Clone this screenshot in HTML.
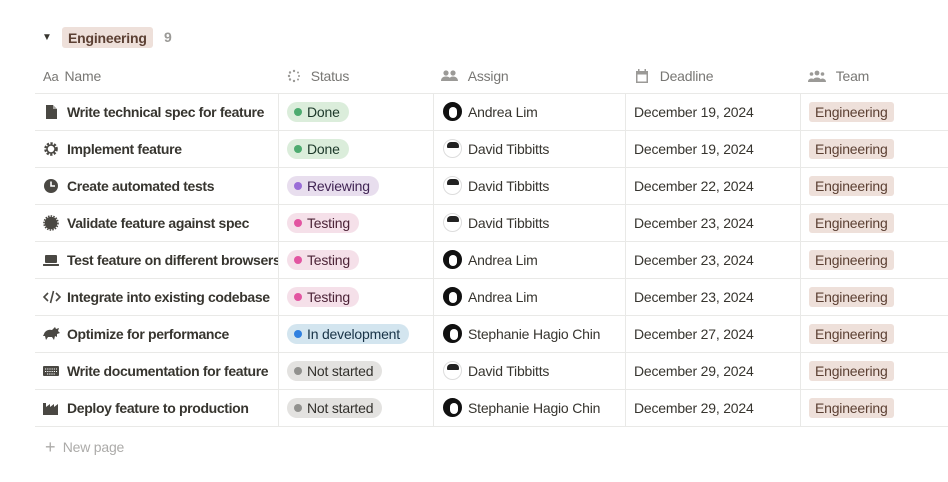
<!DOCTYPE html>
<html><head><meta charset="utf-8"><style>
*{box-sizing:border-box;margin:0;padding:0}
body{width:948px;height:482px;background:#fff;font-family:"Liberation Sans",sans-serif;color:#37352f;position:relative;overflow:hidden;font-size:14px;letter-spacing:-0.2px}
.abs{position:absolute}
.hl{position:absolute;left:35px;right:0;height:1px;background:#e9e9e7}
.vl{position:absolute;width:1px;background:#e9e9e7;top:93px;height:333px}
.hd{position:absolute;top:67px;font-size:14px;color:#787774;display:flex;align-items:center;gap:6px;height:18px}
.row{position:absolute;left:0;width:948px;height:37px}
.c{position:absolute;top:0;height:37px;display:flex;align-items:center;white-space:nowrap;overflow:hidden}
.nm{left:42px;width:236px;font-weight:bold;font-size:14px;gap:7px;letter-spacing:-0.35px}
.nm svg{flex:none}
.pill{display:inline-flex;align-items:center;height:20px;border-radius:10px;padding:0 9px 0 7px;font-size:14px;gap:5px}
.pill i{width:8px;height:8px;border-radius:50%;display:inline-block}
.as{left:443px;gap:6px}
.av{width:19px;height:19px;border-radius:50%;background:#fff;border:1px solid #ddd;position:relative;overflow:hidden}
.dl{left:634px}
.tag{background:#eee0da;color:#5c4033;height:20px;border-radius:3px;padding:0 6px;display:inline-flex;align-items:center;font-size:14px}
</style></head><body>
<div class="abs" style="left:42px;top:32px;font-size:10px">▼</div>
<div class="abs tag" style="left:62px;top:27px;height:21px;font-weight:bold;color:#5c4033">Engineering</div>
<div class="abs" style="left:164px;top:29px;color:#9b9a97;font-weight:bold">9</div>

<div class="hd" style="left:43px"><span style="font-size:13px">Aa</span>Name</div>
<div class="hd" style="left:287px"><svg width="14" height="14" viewBox="0 0 14 14" fill="#9b9a97"><circle cx="7" cy="2" r="1.2"/><circle cx="11" cy="3.5" r="1"/><circle cx="12" cy="7" r="1"/><circle cx="11" cy="10.5" r="1"/><circle cx="7" cy="12" r="1.2"/><circle cx="3" cy="10.5" r="1.2"/><circle cx="2" cy="7" r="1.2"/><circle cx="3" cy="3.5" r="1.2"/></svg>&nbsp;Status</div>
<div class="hd" style="left:441px"><svg width="17" height="12" viewBox="0 0 17 12" fill="#9b9a97"><circle cx="5" cy="3" r="2.6"/><circle cx="12" cy="3" r="2.6"/><path d="M0 11c0-3 2-4.5 5-4.5s5 1.5 5 4.5zM8 11c0-3 1.5-4.5 4-4.5s5 1.5 5 4.5z"/></svg>&nbsp;Assign</div>
<div class="hd" style="left:634px"><svg width="16" height="16" viewBox="0 0 16 16" fill="#9b9a97"><path d="M2 3h12v12H2z M3.5 6.5v7h9v-7z" fill-rule="evenodd"/><rect x="4" y="1" width="1.5" height="3"/><rect x="10.5" y="1" width="1.5" height="3"/></svg>&nbsp;Deadline</div>
<div class="hd" style="left:808px"><svg width="18" height="12" viewBox="0 0 18 12" fill="#9b9a97"><circle cx="9" cy="3" r="2.4"/><circle cx="3.5" cy="4" r="1.8"/><circle cx="14.5" cy="4" r="1.8"/><path d="M4.5 12c0-3 2-4.5 4.5-4.5s4.5 1.5 4.5 4.5zM0 12c0-2.5 1.5-3.5 3.5-3.5S6 9.5 6 12zM12 12c0-2.5 1-3.5 2.5-3.5S18 9.5 18 12z"/></svg>&nbsp;Team</div>

<div class="hl" style="top:93px"></div>
<div class="hl" style="top:130px"></div>
<div class="hl" style="top:167px"></div>
<div class="hl" style="top:204px"></div>
<div class="hl" style="top:241px"></div>
<div class="hl" style="top:278px"></div>
<div class="hl" style="top:315px"></div>
<div class="hl" style="top:352px"></div>
<div class="hl" style="top:389px"></div>
<div class="hl" style="top:426px"></div>
<div class="vl" style="left:278px"></div>
<div class="vl" style="left:433px"></div>
<div class="vl" style="left:625px"></div>
<div class="vl" style="left:800px"></div>

<div class="row" style="top:93px">
<div class="c nm"><svg width="18" height="18" viewBox="0 0 18 18" fill="#4a4843"><path d="M4 2h7l4 4v10H4z"/><path d="M11 2v4h4" fill="#fff" opacity=".5"/></svg>Write technical spec for feature</div>
<div class="c" style="left:287px"><span class="pill" style="background:#dbeddb;color:#1c3829"><i style="background:#4dab6f"></i>Done</span></div>
<div class="c as"><span class="av" style="background:#111;border-color:#111"><span style="position:absolute;left:5px;top:4px;width:8px;height:11px;border-radius:4px;background:#fff"></span></span>Andrea Lim</div>
<div class="c dl">December 19, 2024</div>
<div class="c" style="left:809px"><span class="tag">Engineering</span></div></div>

<div class="row" style="top:130px">
<div class="c nm"><svg width="18" height="18" viewBox="0 0 18 18"><circle cx="9" cy="9" r="5.5" fill="none" stroke="#4a4843" stroke-width="2.6" stroke-dasharray="2.2 1.4"/><circle cx="9" cy="9" r="4" fill="none" stroke="#4a4843" stroke-width="1.5"/></svg>Implement feature</div>
<div class="c" style="left:287px"><span class="pill" style="background:#dbeddb;color:#1c3829"><i style="background:#4dab6f"></i>Done</span></div>
<div class="c as"><span class="av"><span style="position:absolute;left:3px;top:2px;width:12px;height:6px;border-radius:4px 4px 1px 1px;background:#222"></span></span>David Tibbitts</div>
<div class="c dl">December 19, 2024</div>
<div class="c" style="left:809px"><span class="tag">Engineering</span></div></div>

<div class="row" style="top:167px">
<div class="c nm"><svg width="18" height="18" viewBox="0 0 18 18"><circle cx="9" cy="9" r="7" fill="#4a4843"/><path d="M9 4.5V9h4" stroke="#fff" stroke-width="1.6" fill="none"/></svg>Create automated tests</div>
<div class="c" style="left:287px"><span class="pill" style="background:#e8deee;color:#412454"><i style="background:#9a6dd7"></i>Reviewing</span></div>
<div class="c as"><span class="av"><span style="position:absolute;left:3px;top:2px;width:12px;height:6px;border-radius:4px 4px 1px 1px;background:#222"></span></span>David Tibbitts</div>
<div class="c dl">December 22, 2024</div>
<div class="c" style="left:809px"><span class="tag">Engineering</span></div></div>

<div class="row" style="top:204px">
<div class="c nm"><svg width="18" height="18" viewBox="0 0 18 18"><circle cx="9" cy="9" r="6.3" fill="#4a4843"/><circle cx="9" cy="9" r="7" fill="none" stroke="#4a4843" stroke-width="1.6" stroke-dasharray="1.5 1.2"/></svg>Validate feature against spec</div>
<div class="c" style="left:287px"><span class="pill" style="background:#f5e0e9;color:#4c2337"><i style="background:#e255a1"></i>Testing</span></div>
<div class="c as"><span class="av"><span style="position:absolute;left:3px;top:2px;width:12px;height:6px;border-radius:4px 4px 1px 1px;background:#222"></span></span>David Tibbitts</div>
<div class="c dl">December 23, 2024</div>
<div class="c" style="left:809px"><span class="tag">Engineering</span></div></div>

<div class="row" style="top:241px">
<div class="c nm"><svg width="18" height="18" viewBox="0 0 18 18" fill="#4a4843"><rect x="3" y="4" width="12" height="8" rx="1"/><rect x="1" y="13" width="16" height="2" rx=".5"/></svg>Test feature on different browsers</div>
<div class="c" style="left:287px"><span class="pill" style="background:#f5e0e9;color:#4c2337"><i style="background:#e255a1"></i>Testing</span></div>
<div class="c as"><span class="av" style="background:#111;border-color:#111"><span style="position:absolute;left:5px;top:4px;width:8px;height:11px;border-radius:4px;background:#fff"></span></span>Andrea Lim</div>
<div class="c dl">December 23, 2024</div>
<div class="c" style="left:809px"><span class="tag">Engineering</span></div></div>

<div class="row" style="top:278px">
<div class="c nm" style="gap:5px"><svg width="20" height="18" viewBox="0 0 20 18" fill="none" stroke="#4a4843" stroke-width="1.6"><path d="M6 5 2 9l4 4M14 5l4 4-4 4M11.5 3 8.5 15"/></svg>Integrate into existing codebase</div>
<div class="c" style="left:287px"><span class="pill" style="background:#f5e0e9;color:#4c2337"><i style="background:#e255a1"></i>Testing</span></div>
<div class="c as"><span class="av" style="background:#111;border-color:#111"><span style="position:absolute;left:5px;top:4px;width:8px;height:11px;border-radius:4px;background:#fff"></span></span>Andrea Lim</div>
<div class="c dl">December 23, 2024</div>
<div class="c" style="left:809px"><span class="tag">Engineering</span></div></div>

<div class="row" style="top:315px">
<div class="c nm" style="gap:5px"><svg width="20" height="18" viewBox="0 0 20 18" fill="#4a4843"><path d="M2 9c1-3 4-5 8-4l3-3 1 2 3-1-1 3 2 2-3 1v3l-2-1-1 4-2-3H6l-2 3-1-4-2 0z"/></svg>Optimize for performance</div>
<div class="c" style="left:287px"><span class="pill" style="background:#d3e5ef;color:#183347"><i style="background:#2f80e0"></i>In development</span></div>
<div class="c as"><span class="av" style="background:#111;border-color:#111"><span style="position:absolute;left:6px;top:4px;width:8px;height:11px;border-radius:4px;background:#fff"></span></span>Stephanie Hagio Chin</div>
<div class="c dl">December 27, 2024</div>
<div class="c" style="left:809px"><span class="tag">Engineering</span></div></div>

<div class="row" style="top:352px">
<div class="c nm"><svg width="18" height="18" viewBox="0 0 18 18"><rect x="1" y="4" width="16" height="10" rx="1" fill="#4a4843"/><path d="M3 7h12M3 9.5h12M5 12h8" stroke="#fff" stroke-width="1" stroke-dasharray="1.2 1"/></svg>Write documentation for feature</div>
<div class="c" style="left:287px"><span class="pill" style="background:#e3e2e0;color:#32302c"><i style="background:#91918e"></i>Not started</span></div>
<div class="c as"><span class="av"><span style="position:absolute;left:3px;top:2px;width:12px;height:6px;border-radius:4px 4px 1px 1px;background:#222"></span></span>David Tibbitts</div>
<div class="c dl">December 29, 2024</div>
<div class="c" style="left:809px"><span class="tag">Engineering</span></div></div>

<div class="row" style="top:389px">
<div class="c nm"><svg width="18" height="18" viewBox="0 0 18 18" fill="#4a4843"><path d="M1 16V4h3v4l4-3v3l4-3v3l4-3v11z"/></svg>Deploy feature to production</div>
<div class="c" style="left:287px"><span class="pill" style="background:#e3e2e0;color:#32302c"><i style="background:#91918e"></i>Not started</span></div>
<div class="c as"><span class="av" style="background:#111;border-color:#111"><span style="position:absolute;left:6px;top:4px;width:8px;height:11px;border-radius:4px;background:#fff"></span></span>Stephanie Hagio Chin</div>
<div class="c dl">December 29, 2024</div>
<div class="c" style="left:809px"><span class="tag">Engineering</span></div></div>

<div class="abs" style="left:45px;top:436px;color:#acaba9;font-size:14px"><span style="font-size:18px;position:relative;top:1px">+</span>&nbsp;&nbsp;New page</div>
</body></html>
